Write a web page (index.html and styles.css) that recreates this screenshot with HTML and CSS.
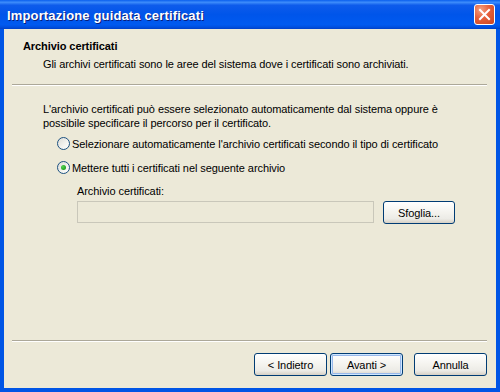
FILE: index.html
```html
<!DOCTYPE html>
<html lang="it">

<head>
    <meta charset="UTF-8">
    <title>Importazione guidata certificati</title>
    <link rel="stylesheet" href="styles.css">
</head>

<body>
    <div class="window">
        <div class="titlebar">
            <span class="title">Importazione guidata certificati</span>
            <button class="close-btn" aria-label="Chiudi">
                <svg width="13" height="13" viewBox="0 0 13 13">
                    <path d="M2 2 L11 11 M11 2 L2 11" stroke="#fff" stroke-width="2" stroke-linecap="square" />
                </svg>
            </button>
        </div>

        <div class="frame">
            <div class="wizard-header">
                <h1>Archivio certificati</h1>
                <p>Gli archivi certificati sono le aree del sistema dove i certificati sono archiviati.</p>
            </div>
            <div class="separator"></div>

            <div class="wizard-body">
                <p class="intro">L'archivio certificati può essere selezionato automaticamente dal sistema oppure è
                    possibile specificare il percorso per il certificato.</p>

                <label class="radio-row">
                    <span class="radio"></span>
                    Selezionare automaticamente l'archivio certificati secondo il tipo di certificato
                </label>
                <label class="radio-row">
                    <span class="radio checked"></span>
                    Mettere tutti i certificati nel seguente archivio
                </label>

                <div class="store-field">
                    <div class="field-label">Archivio certificati:</div>
                    <div class="field-row">
                        <div class="text-box"></div>
                        <button class="xp-btn browse">Sfoglia...</button>
                    </div>
                </div>
            </div>

            <div class="separator"></div>
            <div class="wizard-footer">
                <button class="xp-btn">&lt; Indietro</button>
                <button class="xp-btn default">Avanti &gt;</button>
                <button class="xp-btn cancel">Annulla</button>
            </div>
        </div>
    </div>
</body>

</html>
```

FILE: styles.css
```css
* {
    box-sizing: border-box;
}

body {
    margin: 0;
    background-color: #0054E3;
    font-family: 'Liberation Sans', Arial, sans-serif;
    font-size: 11px;
    letter-spacing: -0.08px;
    color: #000;
}

.window {
    width: 500px;
    height: 392px;
    display: flex;
    flex-direction: column;
}

.titlebar {
    height: 29px;
    flex: none;
    display: flex;
    align-items: center;
    justify-content: space-between;
    padding: 0 5px 0 7px;
    background: linear-gradient(#0A5FEE 0%, #3D8CFB 8%, #0E5BEB 18%, #0055EA 50%, #005AF0 85%, #0050E0 93%, #0040C8 100%);
}

.title {
    color: #fff;
    font-weight: bold;
    font-size: 13px;
    letter-spacing: 0.15px;
    text-shadow: 1px 1px 0 #0A1E7A;
    padding-top: 1px;
}

.close-btn {
    width: 21px;
    height: 21px;
    padding: 0;
    border: 1px solid #fff;
    border-radius: 3px;
    background: radial-gradient(circle at 30% 25%, #F4A080 0%, #E65F3A 45%, #CC4520 100%);
    display: flex;
    align-items: center;
    justify-content: center;
}

.frame {
    flex: 1;
    display: flex;
    flex-direction: column;
    background-color: #ECE9D8;
    border: 4px solid #0055E5;
    border-top: none;
}

.wizard-header {
    height: 55px;
    padding: 11px 0 0 19px;
}

.wizard-header h1 {
    margin: 0;
    font-size: 11px;
    font-weight: bold;
    line-height: 13px;
}

.wizard-header p {
    margin: 5px 0 0 20px;
    line-height: 13px;
}

.separator {
    height: 2px;
    margin: 0 9px 0 8px;
    border-top: 1px solid #ACA899;
    border-bottom: 1px solid #fff;
}

.wizard-body {
    flex: 1;
    padding: 16px 20px 0 39px;
}

.intro {
    margin: 0;
    line-height: 14px;
}

.radio-row {
    display: flex;
    align-items: center;
    gap: 2px;
    height: 13px;
    margin: 7px 0 0 14px;
}

.radio-row + .radio-row {
    margin-top: 11px;
}

.radio {
    width: 13px;
    height: 13px;
    flex: none;
    border: 1px solid #1C5180;
    border-radius: 50%;
    background: linear-gradient(135deg, #DCDCD7 0%, #F4F4F0 60%, #fff 100%);
    display: flex;
    align-items: center;
    justify-content: center;
}

.radio.checked::after {
    content: "";
    width: 5px;
    height: 5px;
    border-radius: 50%;
    background: radial-gradient(circle at 35% 35%, #55D451 0%, #21A121 70%);
}

.store-field {
    margin: 11px 0 0 34px;
}

.field-label {
    line-height: 13px;
}

.field-row {
    display: flex;
    gap: 9px;
    margin-top: 3px;
}

.text-box {
    width: 297px;
    height: 22px;
    border: 1px solid #C9C7BA;
    background-color: #ECE9D8;
}

.xp-btn {
    height: 23px;
    width: 73px;
    padding: 0;
    border: 1px solid #003C74;
    border-radius: 3px;
    background: linear-gradient(#FFFFFF 0%, #F4F3EE 50%, #ECEBE6 80%, #D6D0C5 100%);
    font-family: inherit;
    font-size: 11px;
    letter-spacing: inherit;
    color: #000;
}

.browse {
    width: 72px;
}

.default {
    box-shadow: inset 0 0 0 1px #CEE7FF, inset 0 0 0 2px #98B8EA;
}

.wizard-footer {
    height: 46px;
    display: flex;
    align-items: flex-start;
    padding: 11px 0 0 250px;
    gap: 3px;
}

.cancel {
    margin-left: 8px;
}
```
